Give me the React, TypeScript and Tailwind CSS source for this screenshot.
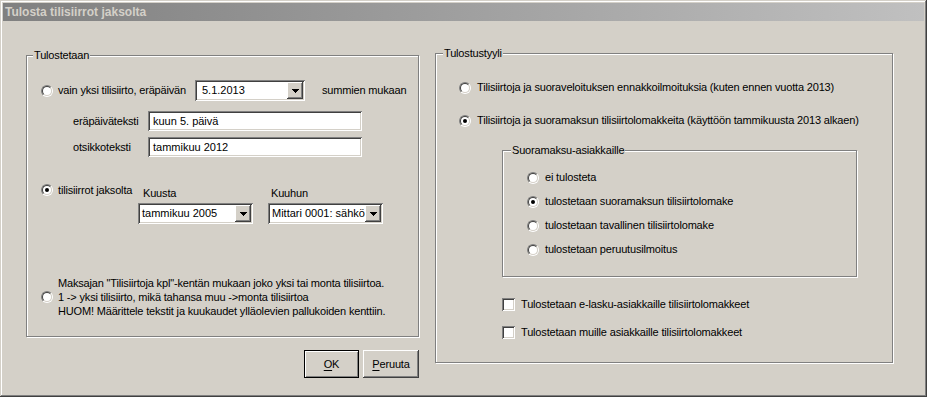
import React from "react";

const sunken =
  "shadow-[inset_1px_1px_0_#808080,inset_-1px_-1px_0_#ffffff,inset_2px_2px_0_#404040,inset_-2px_-2px_0_#d4d0c8]";
const raised =
  "shadow-[inset_-1px_-1px_0_#404040,inset_1px_1px_0_#ffffff,inset_-2px_-2px_0_#808080,inset_2px_2px_0_#d4d0c8]";

function Radio({ checked }: { checked?: boolean }) {
  return (
    <span className="flex h-[12px] w-[12px] shrink-0 items-center justify-center rounded-full border border-t-[#808080] border-l-[#808080] border-b-white border-r-white">
      <span className="flex h-[10px] w-[10px] items-center justify-center rounded-full border border-t-[#404040] border-l-[#404040] border-b-[#d4d0c8] border-r-[#d4d0c8] bg-white">
        {checked && <span className="h-[4px] w-[4px] rounded-full bg-black" />}
      </span>
    </span>
  );
}

function Checkbox() {
  return <span className={`block h-[13px] w-[13px] shrink-0 bg-white ${sunken}`} />;
}

function Arrow() {
  return (
    <svg width="7" height="4" viewBox="0 0 7 4" shapeRendering="crispEdges">
      <rect x="0" y="0" width="7" height="1" fill="#000" />
      <rect x="1" y="1" width="5" height="1" fill="#000" />
      <rect x="2" y="2" width="3" height="1" fill="#000" />
      <rect x="3" y="3" width="1" height="1" fill="#000" />
    </svg>
  );
}

function Combo({ value, className = "", textClass = "pl-[3px]" }: { value: string; className?: string; textClass?: string }) {
  return (
    <div className={`flex h-[21px] items-center bg-white p-[2px] tracking-normal ${sunken} ${className}`}>
      <span className={`min-w-0 flex-1 overflow-hidden whitespace-nowrap leading-[13px] ${textClass}`}>{value}</span>
      <span className={`flex h-[17px] w-[16px] shrink-0 items-center justify-center bg-[#d4d0c8] ${raised}`}>
        <Arrow />
      </span>
    </div>
  );
}

function TextInput({ value }: { value: string }) {
  return (
    <div className={`flex h-[20px] w-[214px] items-center bg-white pl-[5px] tracking-normal ${sunken}`}>
      <span className="whitespace-nowrap leading-[13px]">{value}</span>
    </div>
  );
}

function Group({
  label,
  className = "",
  labelLeft = "left-[6px]",
  children,
}: {
  label: string;
  className?: string;
  labelLeft?: string;
  children?: React.ReactNode;
}) {
  return (
    <div className={`relative shrink-0 border border-[#808080] shadow-[inset_1px_1px_0_#ffffff,1px_1px_0_#ffffff] ${className}`}>
      <span className={`absolute top-[-7px] ${labelLeft} whitespace-nowrap bg-[#d4d0c8] px-[1px] leading-[13px]`}>{label}</span>
      {children}
    </div>
  );
}

function Option({ checked, label, gap = "gap-[6px]" }: { checked?: boolean; label: string; gap?: string }) {
  return (
    <div className={`flex h-[13px] items-center ${gap}`}>
      <Radio checked={checked} />
      <span className="whitespace-nowrap leading-[13px]">{label}</span>
    </div>
  );
}

export default function App() {
  return (
    <div className="flex h-[397px] w-[927px] flex-col bg-[#d4d0c8] p-[3px] font-['Liberation_Sans',Arial,sans-serif] text-[11px] tracking-[-0.17px] text-black shadow-[inset_-1px_-1px_0_#404040,inset_1px_1px_0_#d4d0c8,inset_-2px_-2px_0_#808080,inset_2px_2px_0_#ffffff]">
      {/* title bar */}
      <div className="flex h-[18px] shrink-0 items-center bg-linear-to-r from-[#808080] to-[#c0c0c0] pl-[2px] text-[12px] font-bold tracking-normal text-[#d4d0c8]">
        Tulosta tilisiirrot jaksolta
      </div>

      <div className="flex items-start pl-[23px]">
        {/* left column */}
        <div className="mt-[34px] flex w-[393px] shrink-0 flex-col">
          <Group label="Tulostetaan" className="h-[282px]">
            <div className="flex flex-col pl-[14px] pt-[24px]">
              <div className="flex h-[21px] items-center">
                <div className="flex w-[154px] items-center gap-[5px]">
                  <Radio />
                  <span className="whitespace-nowrap leading-[13px]">vain yksi tilisiirto, eräpäivän</span>
                </div>
                <Combo value="5.1.2013" className="w-[110px]" textClass="pl-[5px]" />
                <span className="ml-[17px] whitespace-nowrap leading-[13px]">summien mukaan</span>
              </div>

              <div className="ml-[32px] mt-[10px] flex items-center">
                <span className="w-[75px] whitespace-nowrap leading-[13px]">eräpäiväteksti</span>
                <TextInput value="kuun 5. päivä" />
              </div>
              <div className="ml-[32px] mt-[6px] flex items-center">
                <span className="w-[75px] whitespace-nowrap leading-[13px]">otsikkoteksti</span>
                <TextInput value="tammikuu 2012" />
              </div>

              <div className="mt-[27px] flex items-start">
                <div className="flex h-[12px] w-[97px] items-center gap-[5px]">
                  <Radio checked />
                  <span className="whitespace-nowrap leading-[13px]">tilisiirrot jaksolta</span>
                </div>
                <div className="flex flex-col">
                  <span className="mt-[3px] pl-[5px] leading-[13px]">Kuusta</span>
                  <Combo value="tammikuu 2005" className="mt-[3px] w-[115px]" textClass="pl-[2px]" />
                </div>
                <div className="ml-[15px] flex flex-col">
                  <span className="mt-[3px] pl-[3px] leading-[13px]">Kuuhun</span>
                  <Combo value="Mittari 0001: sähkö" className="mt-[3px] w-[115px]" textClass="pl-[2px]" />
                </div>
              </div>

              <div className="mt-[52px] flex items-center gap-[5px]">
                <Radio />
                <div className="flex flex-col whitespace-nowrap leading-[14px]">
                  <span>Maksajan "Tilisiirtoja kpl"-kentän mukaan joko yksi tai monta tilisiirtoa.</span>
                  <span>1 -&gt; yksi tilisiirto, mikä tahansa muu -&gt;monta tilisiirtoa</span>
                  <span>HUOM! Määrittele tekstit ja kuukaudet ylläolevien pallukoiden kenttiin.</span>
                </div>
              </div>
            </div>
          </Group>

          <div className="mt-[13px] flex justify-end gap-[4px]">
            <button className="flex h-[28px] w-[55px] items-center justify-center border border-black bg-[#d4d0c8] shadow-[inset_1px_1px_0_#ffffff,inset_-1px_-1px_0_#808080]">
              <span className="leading-[13px]">
                <span className="underline underline-offset-[2px]">O</span>K
              </span>
            </button>
            <button className={`flex h-[28px] w-[56px] items-center justify-center bg-[#d4d0c8] ${raised}`}>
              <span className="leading-[13px]">
                <span className="underline underline-offset-[2px]">P</span>eruuta
              </span>
            </button>
          </div>
        </div>

        {/* right group */}
        <Group label="Tulostustyyli" className="ml-[16px] mt-[32px] h-[310px] w-[458px]" labelLeft="left-[7px]">
          <div className="flex flex-col pl-[23px] pt-[27px]">
            <Option label="Tilisiirtoja ja suoraveloituksen ennakkoilmoituksia (kuten ennen vuotta 2013)" />
            <div className="mt-[20px]">
              <Option checked label="Tilisiirtoja ja suoramaksun tilisiirtolomakkeita (käyttöön tammikuusta 2013 alkaen)" />
            </div>

            <Group label="Suoramaksu-asiakkaille" className="ml-[43px] mt-[23px] h-[127px] w-[355px]" labelLeft="left-[8px]">
              <div className="flex flex-col gap-[11px] pl-[24px] pt-[20px]">
                <Option label="ei tulosteta" />
                <Option checked label="tulostetaan suoramaksun tilisiirtolomake" />
                <Option label="tulostetaan tavallinen tilisiirtolomake" />
                <Option label="tulostetaan peruutusilmoitus" />
              </div>
            </Group>

            <div className="ml-[43px] mt-[21px] flex h-[13px] items-center gap-[6px]">
              <Checkbox />
              <span className="whitespace-nowrap leading-[13px]">Tulostetaan e-lasku-asiakkaille tilisiirtolomakkeet</span>
            </div>
            <div className="ml-[43px] mt-[15px] flex h-[13px] items-center gap-[6px]">
              <Checkbox />
              <span className="whitespace-nowrap leading-[13px]">Tulostetaan muille asiakkaille tilisiirtolomakkeet</span>
            </div>
          </div>
        </Group>
      </div>
    </div>
  );
}
